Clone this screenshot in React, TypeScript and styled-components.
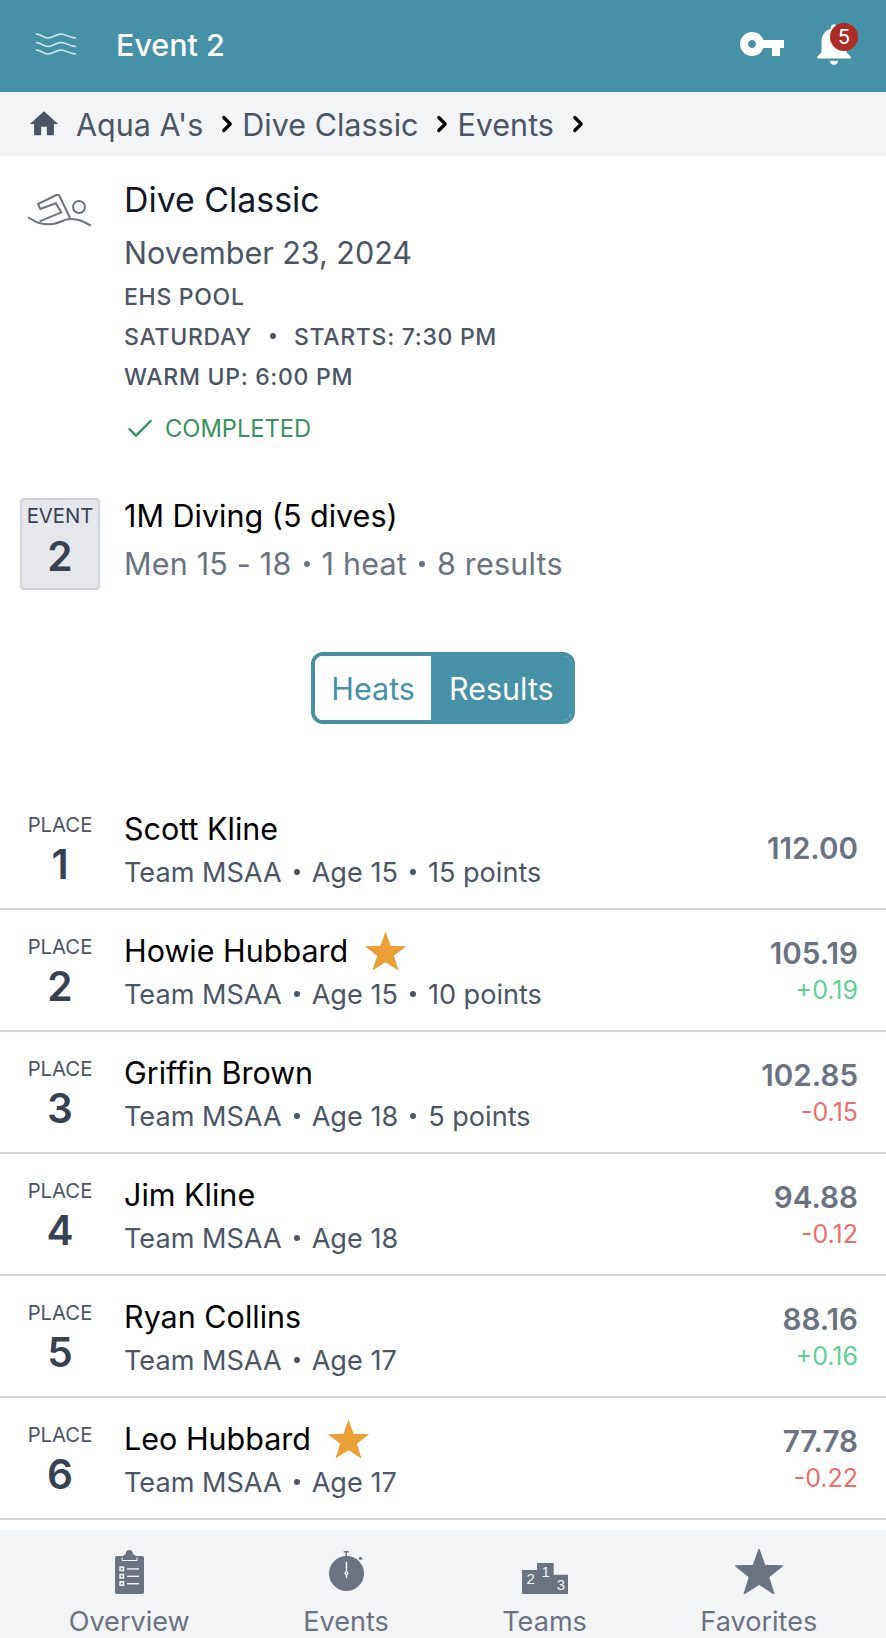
import React from 'react'
import styled, { createGlobalStyle } from 'styled-components'
import { MdHome, MdNotifications, MdVpnKey } from 'react-icons/md'
import { ChevronRight, Check } from 'lucide-react'

const GlobalStyle = createGlobalStyle`
  html, body {
    margin: 0;
    padding: 0;
    background: #fff;
    font-family: Inter, "Noto Sans", sans-serif;
  }
  * { box-sizing: border-box; }
`

const Page = styled.div`
  width: 886px;
  height: 1638px;
  display: flex;
  flex-direction: column;
  overflow: hidden;
  background: #fff;
`

const Header = styled.header`
  height: 92px;
  flex: none;
  background: #4691a8;
  display: flex;
  align-items: center;
  padding: 0 27px 4px 36px;
  color: #fff;
`

const HeaderTitle = styled.div`
  font-size: 30.5px;
  font-weight: 500;
  margin-left: 40px;
  flex: 1;
`

const BellWrap = styled.div`
  position: relative;
  margin-left: 23px;
  width: 50px;
  height: 50px;
`

const Badge = styled.span`
  position: absolute;
  top: 4px;
  right: 1px;
  width: 28px;
  height: 28px;
  border-radius: 50%;
  background: #aa2e25;
  color: #fff;
  font-size: 20px;
  display: flex;
  align-items: center;
  justify-content: center;
`

const Crumbs = styled.nav`
  height: 64px;
  flex: none;
  background: #f3f4f6;
  display: flex;
  align-items: center;
  padding-left: 27px;
  color: #4b5563;
  font-size: 30.5px;
`

const Crumb = styled.span<{ $first?: boolean }>`
  margin-left: ${p => (p.$first ? '15px' : '0')};
`

const CrumbArrow = styled.span`
  display: flex;
  color: #000;
  margin: 0 2px 0 11px;
`

const Meet = styled.section`
  display: flex;
  padding: 22px 0 0 28px;
`

const MeetIcon = styled.div`
  width: 96px;
  flex: none;
  padding-top: 16px;
`

const MeetTitle = styled.div`
  font-size: 33.9px;
  line-height: 44px;
  color: #111827;
`

const MeetDate = styled.div`
  font-size: 30.5px;
  line-height: 44px;
  margin: 9px 0 2px;
  color: #4b5563;
`

const MeetLine = styled.div`
  font-size: 23px;
  font-weight: 500;
  line-height: 40px;
  letter-spacing: 0.7px;
  color: #4b5563;
`

const Status = styled.div`
  display: flex;
  align-items: center;
  gap: 9px;
  margin-top: 12px;
  color: #38915f;
  font-size: 23.7px;
  line-height: 40px;
`

const Dot = styled.span<{ $gap?: number }>`
  display: inline-block;
  width: 6px;
  height: 6px;
  border-radius: 50%;
  background: currentColor;
  vertical-align: 0.26em;
  margin: 0 ${p => p.$gap ?? 12}px;
`

const EventRow = styled.section`
  display: flex;
  padding: 49px 0 0 20px;
`

const EventBox = styled.div`
  width: 80px;
  height: 92px;
  flex: none;
  background: #e5e7eb;
  border: 2px solid #d1d5db;
  border-radius: 4px;
  display: flex;
  flex-direction: column;
  align-items: center;
  color: #374151;
  font-size: 20.3px;
  padding-top: 3px;
`

const BoxNumber = styled.div`
  font-size: 40.6px;
  font-weight: 600;
  line-height: 50px;
  margin-top: 4px;
`

const EventInfo = styled.div`
  margin-left: 24px;
`

const EventName = styled.div`
  font-size: 30.5px;
  line-height: 36px;
  color: #000;
`

const EventMeta = styled.div`
  font-size: 30.5px;
  line-height: 44px;
  letter-spacing: 0.2px;
  margin-top: 8px;
  color: #6b7280;
`

const Toggle = styled.div`
  align-self: center;
  display: flex;
  margin-top: 62px;
  height: 72px;
  border: 4px solid #4691a8;
  border-radius: 12px;
  overflow: hidden;
  font-size: 30.5px;
`

const ToggleItem = styled.div<{ $active?: boolean }>`
  display: flex;
  align-items: center;
  padding: ${p => (p.$active ? '0 17px 0 18px' : '0 16px')};
  background: ${p => (p.$active ? '#4691a8' : '#fff')};
  color: ${p => (p.$active ? '#fff' : '#4691a8')};
`

const List = styled.div`
  flex: 1;
  min-height: 0;
  overflow: hidden;
  margin-top: 64px;
`

const Row = styled.div`
  height: 122px;
  display: flex;
  align-items: flex-start;
  border-bottom: 2px solid #d1d5db;
  padding: 0 28px 0 0;
`

const PlaceCol = styled.div`
  width: 124px;
  flex: none;
  display: flex;
  flex-direction: column;
  align-items: center;
  padding: 24px 4px 0 0;
  color: #4b5563;
  font-size: 20.3px;
`

const PlaceNumber = styled.div`
  font-size: 40.6px;
  font-weight: 600;
  line-height: 48px;
  margin-top: 4px;
  color: #374151;
`

const Swimmer = styled.div`
  flex: 1;
  padding-top: 19px;
`

const Name = styled.div`
  display: flex;
  align-items: center;
  gap: 16px;
  font-size: 30.5px;
  line-height: 44px;
  color: #000;
`

const Meta = styled.div`
  font-size: 27.1px;
  line-height: 40px;
  margin-top: 2px;
  color: #4b5563;
`

const ScoreCol = styled.div<{ $withDelta: boolean }>`
  align-self: center;
  display: flex;
  flex-direction: column;
  align-items: flex-end;
  padding-top: ${p => (p.$withDelta ? '4px' : '0')};
`

const Score = styled.div`
  font-size: 29.6px;
  font-weight: 600;
  line-height: 36px;
  color: #6b7280;
`

const Delta = styled.div<{ $up: boolean }>`
  font-size: 25px;
  line-height: 38px;
  color: ${p => (p.$up ? '#5fcf95' : '#ea6f6b')};
`

const Footer = styled.footer`
  height: 108px;
  flex: none;
  margin-top: 10px;
  padding: 0 12px;
  background: #f3f4f6;
  display: flex;
  justify-content: space-around;
`

const Tab = styled.div`
  display: flex;
  flex-direction: column;
  align-items: center;
  color: #6b7280;
  font-size: 27.1px;
`

const TabIcon = styled.div`
  height: 64px;
  margin-bottom: 11px;
  display: flex;
  align-items: flex-end;
  justify-content: center;
`

const Waves = () => (
  <svg width="40" height="22" viewBox="0 0 40 22" fill="none" stroke="#d5e8ee" strokeWidth="1.5">
    <path d="M0 1c5 0 7 4 12 4s8-4 13-4 9 4 15 4" />
    <path d="M0 9.500c5 0 7 4 12 4s8-4 13-4 9 4 15 4" />
    <path d="M0 17c5 0 7 4 12 4s8-4 13-4 9 4 15 4" />
  </svg>
)

const SwimIcon = () => (
  <svg width="64" height="34" viewBox="0 0 64 34" fill="none" stroke="#6b7280" strokeWidth="2">
    <path d="M0 23.300c4 2 7 5 12 6 5 1 9 1 13 .7 6-.5 11-5 17-5 4 0 8 .5 11 1.700 4 1.500 7 3.500 10 5" />
    <path d="M11.700 27.300 33.300 18.300 27.700 9.300 12.300 15 10 10 28.300 1Q30.500.500 31.500 2L42 24" />
    <circle cx="51" cy="13" r="6" />
  </svg>
)

const StarIcon = ({ width, height, color, round }: { width: number; height: number; color: string; round?: boolean }) => (
  <svg width={width} height={height} viewBox="0 0 100 95" fill={color} stroke={round ? color : 'none'} strokeWidth={round ? 3 : 0} strokeLinejoin="round">
    <path d="M50 1 62 35 99 36 70 59 81 94 50 74 19 94 30 59 1 36 38 35z" />
  </svg>
)

const ClipboardIcon = () => (
  <svg width="29" height="44" viewBox="0 0 29 44" fill="#6b7280">
    <circle cx="14.300" cy="3.500" r="3.500" />
    <rect x="8.700" y="4.500" width="11.500" height="5" rx="1" />
    <rect y="6" width="29" height="38" rx="2" />
    <path d="M7 7.500v3h15v-3" fill="none" stroke="#f3f4f6" strokeWidth="1" />
    <g fill="#f3f4f6">
      <rect x="4.300" y="16.300" width="5" height="5" />
      <rect x="4.300" y="23.700" width="5" height="5" />
      <rect x="4.300" y="31" width="5" height="5" />
      <rect x="12" y="18.200" width="12" height="1.400" />
      <rect x="12" y="25.600" width="12" height="1.400" />
      <rect x="12" y="33" width="12" height="1.400" />
    </g>
    <rect x="5.900" y="17.900" width="1.800" height="1.800" />
    <rect x="5.900" y="25.300" width="1.800" height="1.800" />
    <rect x="5.900" y="32.600" width="1.800" height="1.800" />
  </svg>
)

const WatchIcon = () => (
  <svg width="35" height="43" viewBox="0 0 35 43" fill="#6b7280">
    <rect x="14.700" y="0" width="5" height="1.500" />
    <rect x="16.500" y="0" width="1.500" height="6" />
    <path d="M29.500 8 31 5.500 34 8 31 9z" />
    <circle cx="17.500" cy="22.500" r="17.500" />
    <path d="M16.700 10.700h1.500v15l-.75 2-.75-2z" fill="#f3f4f6" />
    <circle cx="17.450" cy="22.300" r="2" fill="#f3f4f6" />
    <circle cx="17.450" cy="22.300" r=".8" />
  </svg>
)

const PodiumIcon = () => (
  <svg width="46" height="31" viewBox="0 0 46 31" fill="#6b7280">
    <path d="M0 7h15V0h16.700v11.700H46V31H0z" />
    <g fill="#f3f4f6" fontFamily="Liberation Sans Narrow, Liberation Sans, sans-serif" fontSize="15" textAnchor="middle">
      <text x="8.700" y="20.500">2</text>
      <text x="23.700" y="14">1</text>
      <text x="39" y="27">3</text>
    </g>
  </svg>
)

const results = [
  { place: 1, name: 'Scott Kline', meta: ['Team MSAA', 'Age 15', '15 points'], score: '112.00' },
  { place: 2, name: 'Howie Hubbard', star: true, meta: ['Team MSAA', 'Age 15', '10 points'], score: '105.19', delta: '+0.19' },
  { place: 3, name: 'Griffin Brown', meta: ['Team MSAA', 'Age 18', '5 points'], score: '102.85', delta: '-0.15' },
  { place: 4, name: 'Jim Kline', meta: ['Team MSAA', 'Age 18'], score: '94.88', delta: '-0.12' },
  { place: 5, name: 'Ryan Collins', meta: ['Team MSAA', 'Age 17'], score: '88.16', delta: '+0.16' },
  { place: 6, name: 'Leo Hubbard', star: true, meta: ['Team MSAA', 'Age 17'], score: '77.78', delta: '-0.22' },
]

export default function App() {
  return (
    <Page>
      <GlobalStyle />
      <Header>
        <Waves />
        <HeaderTitle>Event 2</HeaderTitle>
        <MdVpnKey size={48} color="#fff" />
        <BellWrap>
          <MdNotifications size={50} color="#fff" />
          <Badge>5</Badge>
        </BellWrap>
      </Header>
      <Crumbs>
        <MdHome size={34} color="#4b5563" />
        <Crumb $first>Aqua A's</Crumb>
        <CrumbArrow><ChevronRight size={26} strokeWidth={3} /></CrumbArrow>
        <Crumb>Dive Classic</Crumb>
        <CrumbArrow><ChevronRight size={26} strokeWidth={3} /></CrumbArrow>
        <Crumb>Events</Crumb>
        <CrumbArrow><ChevronRight size={26} strokeWidth={3} /></CrumbArrow>
      </Crumbs>
      <Meet>
        <MeetIcon><SwimIcon /></MeetIcon>
        <div>
          <MeetTitle>Dive Classic</MeetTitle>
          <MeetDate>November 23, 2024</MeetDate>
          <MeetLine>EHS POOL</MeetLine>
          <MeetLine>SATURDAY<Dot $gap={18} />STARTS: 7:30 PM</MeetLine>
          <MeetLine>WARM UP: 6:00 PM</MeetLine>
          <Status><Check size={32} strokeWidth={1.8} />COMPLETED</Status>
        </div>
      </Meet>
      <EventRow>
        <EventBox>
          EVENT
          <BoxNumber>2</BoxNumber>
        </EventBox>
        <EventInfo>
          <EventName>1M Diving (5 dives)</EventName>
          <EventMeta>Men 15 - 18<Dot />1 heat<Dot />8 results</EventMeta>
        </EventInfo>
      </EventRow>
      <Toggle>
        <ToggleItem>Heats</ToggleItem>
        <ToggleItem $active>Results</ToggleItem>
      </Toggle>
      <List>
        {results.map(r => (
          <Row key={r.place}>
            <PlaceCol>
              PLACE
              <PlaceNumber>{r.place}</PlaceNumber>
            </PlaceCol>
            <Swimmer>
              <Name>
                {r.name}
                {r.star && <StarIcon width={43} height={40} color="#eba037" />}
              </Name>
              <Meta>
                {r.meta.map((m, i) => (
                  <React.Fragment key={m}>
                    {i > 0 && <Dot />}
                    {m}
                  </React.Fragment>
                ))}
              </Meta>
            </Swimmer>
            <ScoreCol $withDelta={!!r.delta}>
              <Score>{r.score}</Score>
              {r.delta && <Delta $up={r.delta[0] === '+'}>{r.delta}</Delta>}
            </ScoreCol>
          </Row>
        ))}
      </List>
      <Footer>
        <Tab><TabIcon><ClipboardIcon /></TabIcon>Overview</Tab>
        <Tab><TabIcon><WatchIcon /></TabIcon>Events</Tab>
        <Tab><TabIcon><PodiumIcon /></TabIcon>Teams</Tab>
        <Tab><TabIcon><StarIcon width={48} height={45} color="#6b7280" round /></TabIcon>Favorites</Tab>
      </Footer>
    </Page>
  )
}
